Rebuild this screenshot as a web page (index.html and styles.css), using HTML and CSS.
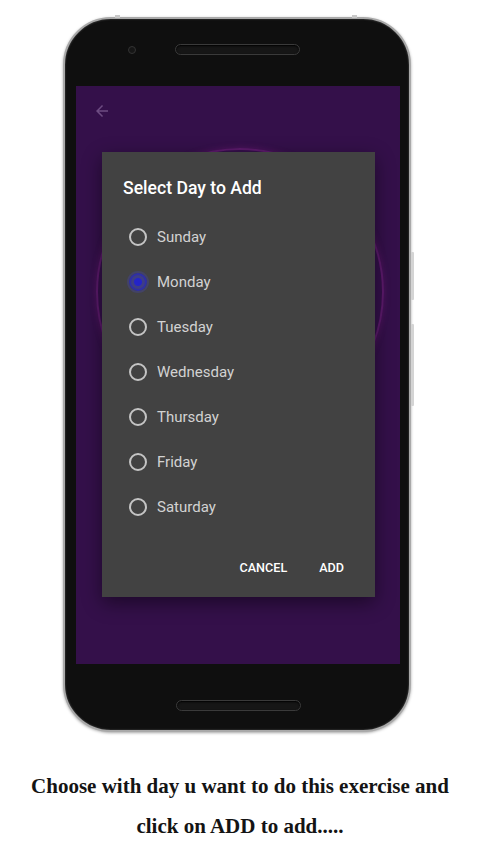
FILE: index.html
```html
<!DOCTYPE html>
<html lang="en">

<head>
    <meta charset="UTF-8">
    <title>Select Day</title>
    <link rel="stylesheet" href="styles.css">
</head>

<body>
    <div class="page">
        <div class="phone">
            <span class="bump bump-left"></span>
            <span class="bump bump-right"></span>
            <span class="side-key key-one"></span>
            <span class="side-key key-two"></span>

            <div class="bezel-top">
                <span class="camera"></span>
                <span class="speaker"></span>
            </div>

            <div class="screen">
                <div class="toolbar">
                    <svg class="back" viewBox="0 0 24 24" width="18" height="18">
                        <path d="M20 11H7.83l5.59-5.59L12 4l-8 8 8 8 1.41-1.41L7.83 13H20v-2z" fill="currentColor" />
                    </svg>
                </div>
                <div class="ring"></div>

                <div class="dialog">
                    <h2 class="title">Select Day to Add</h2>
                    <ul class="days">
                        <li><span class="radio"></span>Sunday</li>
                        <li><span class="radio checked"></span>Monday</li>
                        <li><span class="radio"></span>Tuesday</li>
                        <li><span class="radio"></span>Wednesday</li>
                        <li><span class="radio"></span>Thursday</li>
                        <li><span class="radio"></span>Friday</li>
                        <li><span class="radio"></span>Saturday</li>
                    </ul>
                    <div class="actions">
                        <button class="btn">CANCEL</button>
                        <button class="btn">ADD</button>
                    </div>
                </div>
            </div>

            <div class="bezel-bottom">
                <span class="speaker"></span>
            </div>
        </div>

        <p class="caption">Choose with day u want to do this exercise and<br>click on ADD to add.....</p>
    </div>
</body>

</html>
```

FILE: styles.css
```css
* {
    padding: 0;
    margin: 0;
    list-style: none;
    border: 0;
    box-sizing: border-box;
}

body {
    background: #fff;
    font-family: Roboto, "Liberation Sans", sans-serif;
}

.page {
    width: 480px;
    padding-top: 17px;
}

.phone {
    position: relative;
    width: 348px;
    height: 715px;
    margin-left: 63px;
    padding: 0 9px 0 11px;
    background: #0f0f0f;
    border: 2px solid #a9a9a9;
    border-radius: 48px;
    box-shadow: 0 1px 3px rgba(0, 0, 0, 0.35), inset 0 0 2px #555;
    display: flex;
    flex-direction: column;
}

/* little marks on the frame */
.bump {
    position: absolute;
    top: -4px;
    width: 5px;
    height: 3px;
    background: #c9c9c9;
}

.bump-left {
    left: 50px;
}

.bump-right {
    right: 52px;
}

.side-key {
    position: absolute;
    right: -5px;
    width: 3px;
    background: #d4d4d4;
    border-radius: 1px;
}

.key-one {
    top: 233px;
    height: 48px;
}

.key-two {
    top: 305px;
    height: 82px;
}

.bezel-top {
    height: 67px;
    display: flex;
    align-items: flex-start;
}

.camera {
    width: 8px;
    height: 8px;
    margin: 27px 0 0 52px;
    border-radius: 50%;
    background: #161616;
    border: 1px solid #333;
}

.speaker {
    display: block;
    width: 125px;
    height: 11px;
    border-radius: 6px;
    background: #161616;
    border: 1px solid #3a3a3a;
    box-shadow: inset 0 1px 2px #000;
}

.bezel-top .speaker {
    margin: 25px 0 0 39px;
}

.bezel-bottom {
    flex: 1;
    display: flex;
    justify-content: center;
    padding-top: 36px;
}

.screen {
    position: relative;
    height: 578px;
    background: #34104a;
    overflow: hidden;
}

.toolbar {
    height: 50px;
    padding: 16px 0 0 17px;
}

.back {
    display: block;
    color: #6d4c82;
}

.ring {
    position: absolute;
    left: 20px;
    top: 62px;
    width: 288px;
    height: 288px;
    border-radius: 50%;
    border: 2px solid #5c1a6c;
    box-shadow: 0 0 6px rgba(150, 30, 150, 0.35);
}

.dialog {
    position: absolute;
    left: 26px;
    top: 66px;
    width: 273px;
    height: 445px;
    background: #424242;
    padding: 24px 0 12px 21px;
    box-shadow: 0 6px 18px rgba(0, 0, 0, 0.45);
    display: flex;
    flex-direction: column;
}

.title {
    font-size: 17.6px;
    line-height: 24px;
    font-weight: 500;
    color: #fff;
}

.days {
    margin-top: 14px;
}

.days li {
    height: 45px;
    display: flex;
    align-items: center;
    font-size: 15px;
    color: #d2d2d2;
}

.radio {
    width: 18px;
    height: 18px;
    margin: 0 10px 0 6px;
    border-radius: 50%;
    border: 2px solid #c4c4c4;
}

.radio.checked {
    border-color: #2f2fa6;
    background: radial-gradient(circle, #2424c8 0 3.5px, #3d3d86 4.5px);
    box-shadow: 0 0 0 2px rgba(70, 70, 170, 0.35);
}

.actions {
    margin-top: auto;
    height: 36px;
    display: flex;
    justify-content: flex-end;
    align-items: center;
    padding-right: 31px;
    gap: 32px;
}

.btn {
    background: none;
    font-family: Roboto, "Liberation Sans", sans-serif;
    font-size: 12.6px;
    font-weight: 500;
    color: #fff;
}

.caption {
    margin-top: 34px;
    text-align: center;
    font-family: "Liberation Serif", serif;
    font-weight: bold;
    font-size: 21px;
    line-height: 40px;
    color: #141414;
}
```
